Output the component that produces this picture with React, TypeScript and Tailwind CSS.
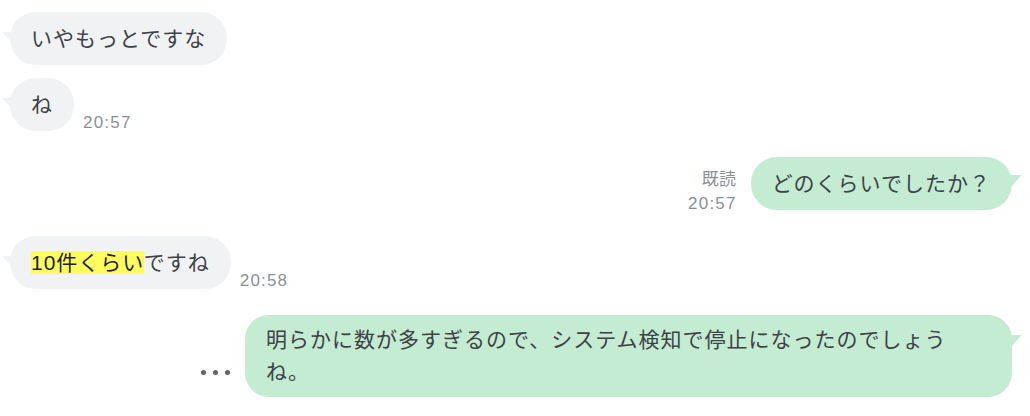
const font = {
  fontFamily: '"Liberation Sans", "Noto Sans CJK JP", sans-serif',
};

function LeftTail() {
  return (
    <svg
      className="absolute left-[-8px] top-[20px]"
      width="14"
      height="16"
      viewBox="0 0 14 16"
      aria-hidden
    >
      <path d="M0 0 H14 V16 Q7 7 0 0 Z" fill="#f1f2f4" />
    </svg>
  );
}

function RightTail({ top }: { top: string }) {
  return (
    <svg
      className={`absolute right-[-10px] ${top}`}
      width="14"
      height="16"
      viewBox="0 0 14 16"
      aria-hidden
    >
      <path d="M14 0 H0 V16 Q7 7 14 0 Z" fill="#c3ecd3" />
    </svg>
  );
}

function LeftBubble({ children }: { children: React.ReactNode }) {
  return (
    <div className="relative rounded-[26px] bg-[#f1f2f4] px-[21px] py-[10px] text-[21px] leading-[33px] tracking-[1px] whitespace-nowrap text-[#3e4146]">
      <LeftTail />
      {children}
    </div>
  );
}

function Time({ value }: { value: string }) {
  return (
    <span className="mb-[-1px] text-[17px] leading-[18px] tracking-[1.2px] text-[#8b9096]">{value}</span>
  );
}

export default function App() {
  return (
    <div className="h-[416px] w-[1030px] bg-white pt-[12px] pr-[18px] pl-[10px]" style={font}>
      <div className="flex items-end gap-[9px]">
        <LeftBubble>いやもっとですな</LeftBubble>
      </div>

      <div className="mt-[13px] flex items-end gap-[9px]">
        <LeftBubble>ね</LeftBubble>
        <Time value="20:57" />
      </div>

      <div className="mt-[26px] flex items-end justify-end gap-[14px]">
        <div className="mb-[-6px] flex flex-col items-end text-[17px] leading-[24px] text-[#8b9096]">
          <span className="tracking-[0.5px]">既読</span>
          <span className="tracking-[1.2px]">20:57</span>
        </div>
        <div className="relative rounded-[26px] bg-[#c3ecd3] px-[21px] py-[10px] text-[21px] leading-[33px] tracking-[1px] whitespace-nowrap text-[#3e4146]">
          <RightTail top="top-[18px]" />
          どのくらいでしたか？
        </div>
      </div>

      <div className="mt-[26px] flex items-end gap-[9px]">
        <LeftBubble>
          <span className="bg-[#fdfd5e] text-[#1f2124]">10件くらい</span>ですね
        </LeftBubble>
        <Time value="20:58" />
      </div>

      <div className="mt-[26px] flex items-end justify-end gap-[15px]">
        <div className="mb-[22px] flex gap-[7px]">
          <span className="h-[5px] w-[5px] rounded-full bg-[#5f6368]" />
          <span className="h-[5px] w-[5px] rounded-full bg-[#5f6368]" />
          <span className="h-[5px] w-[5px] rounded-full bg-[#5f6368]" />
        </div>
        <div className="relative w-[767px] rounded-[24px] bg-[#c3ecd3] px-[21px] py-[9px] text-[21px] leading-[32px] tracking-[1px] whitespace-nowrap text-[#3e4146]">
          <RightTail top="top-[20px]" />
          明らかに数が多すぎるので、システム検知で停止になったのでしょう
          <br />
          ね。
        </div>
      </div>
    </div>
  );
}
